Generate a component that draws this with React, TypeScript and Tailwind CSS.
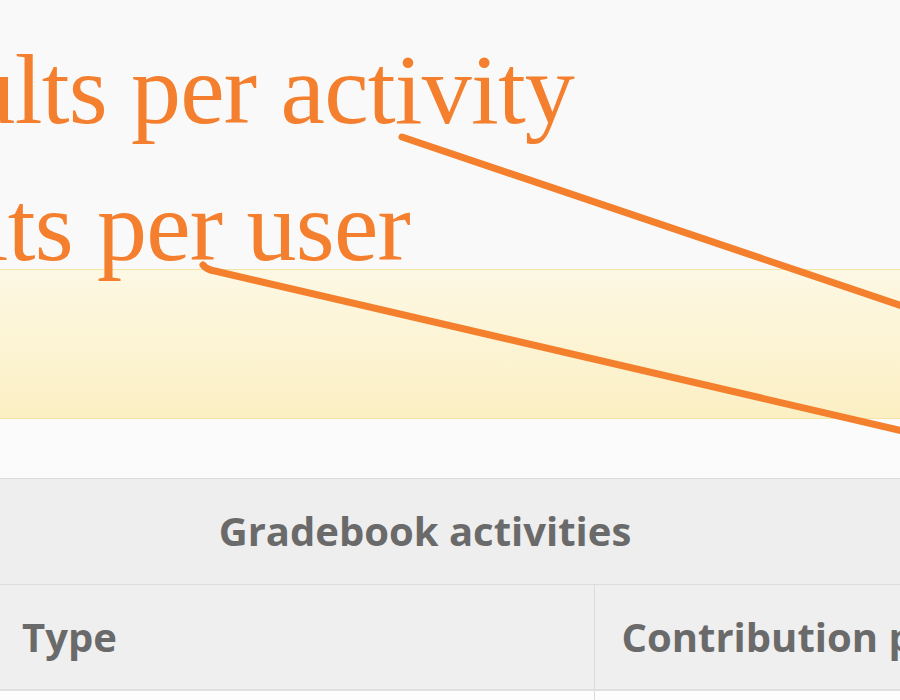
import React from 'react'

const ORANGE = '#f47f2c'

// Callout text and arrows laid over the captured page
function Callouts() {
  return (
    <div className="pointer-events-none absolute inset-0">
      <p className="absolute left-[-182px] top-[40px] whitespace-nowrap text-[100px] leading-none tracking-[-0.8px] text-[#f4802f] [font-family:'Liberation_Serif',serif]">
        Results per activity
      </p>
      <p className="absolute left-[-216px] top-[177px] whitespace-nowrap text-[100px] leading-none tracking-[-0.8px] text-[#f4802f] [font-family:'Liberation_Serif',serif]">
        Results per user
      </p>
      <svg className="absolute inset-0" width={900} height={700} viewBox="0 0 900 700">
        <line x1={402} y1={137} x2={920} y2={312} stroke={ORANGE} strokeWidth={7} strokeLinecap="round" />
        <path d="M203 265 Q207 270 215 271 L920 435" fill="none" stroke={ORANGE} strokeWidth={7} strokeLinecap="round" />
      </svg>
    </div>
  )
}

export default function App() {
  return (
    <div className="relative h-[700px] w-[900px] overflow-hidden bg-[#f9f9f9] [font-family:'Open_Sans',sans-serif]">
      <div className="h-[269px]" />

      {/* notice box */}
      <div className="h-[150px] border-y border-[#f3e4a8] bg-gradient-to-b from-[#fdf8e4] to-[#fbefc3]" />

      <div className="h-[59px] bg-[#fbfbfb]" />

      <table className="w-max border-collapse text-[40px] font-bold leading-none text-[#6a6a6a]">
        <thead>
          <tr className="border-y border-[#dcdcdc] bg-[#eeeeee]">
            <th colSpan={2} className="h-[106px] p-0">
              <div className="w-[850px] pb-[2px] text-center">Gradebook activities</div>
            </th>
          </tr>
          <tr className="border-b-2 border-[#e0e0e0] bg-[#efefef]">
            <th className="h-[105px] w-[594px] border-r border-[#dcdcdc] pl-[22px] text-left">Type</th>
            <th className="h-[105px] w-[600px] pl-[27px] text-left whitespace-nowrap">Contribution percentage</th>
          </tr>
        </thead>
        <tbody>
          <tr className="bg-[#fdfdfd]">
            <td className="h-[40px] border-r border-[#dcdcdc]" />
            <td className="h-[40px]" />
          </tr>
        </tbody>
      </table>

      <Callouts />
    </div>
  )
}
